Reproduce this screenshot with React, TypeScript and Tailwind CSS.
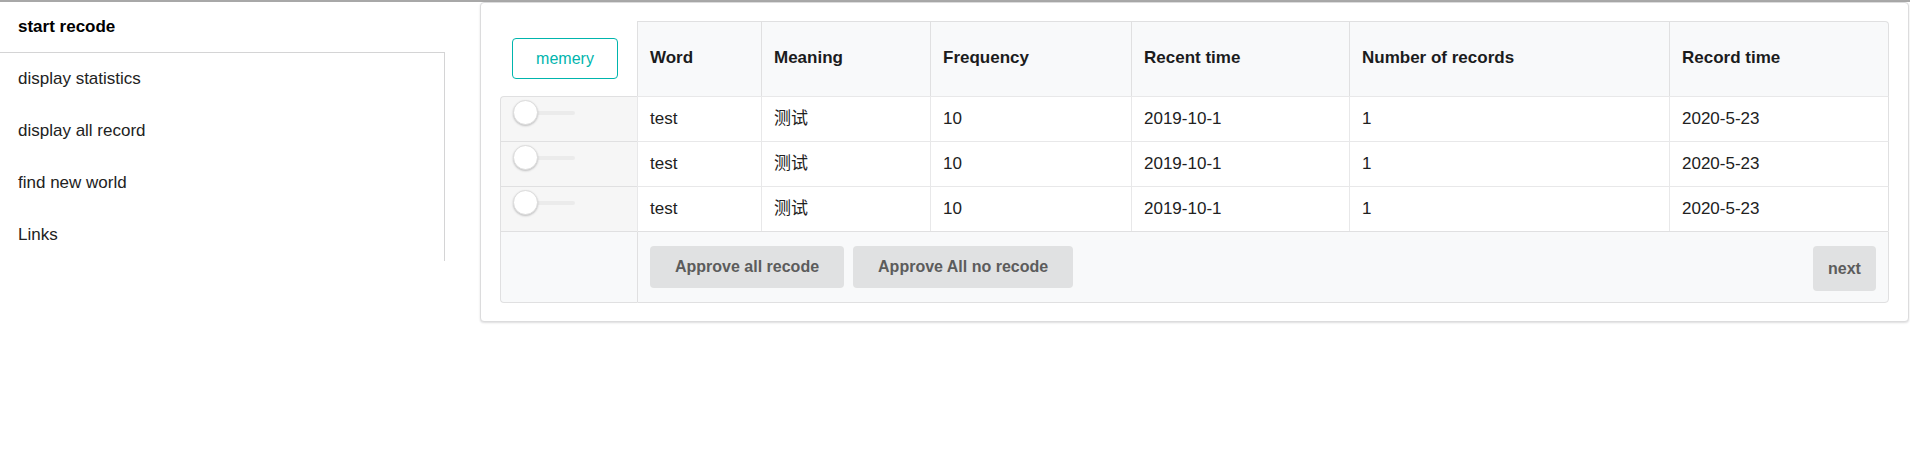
import React from "react";

const rows = [
  { word: "test", meaning: "测试", freq: "10", recent: "2019-10-1", count: "1", time: "2020-5-23" },
  { word: "test", meaning: "测试", freq: "10", recent: "2019-10-1", count: "1", time: "2020-5-23" },
  { word: "test", meaning: "测试", freq: "10", recent: "2019-10-1", count: "1", time: "2020-5-23" },
];

const headers = ["Word", "Meaning", "Frequency", "Recent time", "Number of records", "Record time"];

function Toggle() {
  return (
    <div className="relative h-[26px] w-[62px]">
      <div className="absolute left-[12px] top-[11px] h-[4px] w-[50px] rounded-full bg-[#ebebeb]" />
      <div className="absolute left-0 top-0 h-[25px] w-[25px] rounded-full border border-[#dcdcdc] bg-white shadow-[0_1px_2px_0_rgba(34,36,38,0.25)]" />
    </div>
  );
}

function GrayButton({ children, className = "" }: { children: React.ReactNode; className?: string }) {
  return (
    <button className={"rounded-[4px] bg-[#e0e1e2] text-[16px] font-bold text-[#5c5c5c] " + className}>
      {children}
    </button>
  );
}

export default function App() {
  return (
    <div className="min-h-[460px] w-full bg-white font-['Liberation_Sans','Noto_Sans_CJK_SC',sans-serif] text-[17px] text-[#212121]">
      <div className="h-[2px] w-full bg-[#a8a8a8]" />
      <div className="flex">
        <nav className="w-[445px] shrink-0">
          <div className="flex h-[51px] items-center border-b border-[#d4d4d5] px-[18px] font-bold text-black">
            start recode
          </div>
          <ul className="border-r border-[#d4d4d5]">
            {["display statistics", "display all record", "find new world", "Links"].map((item) => (
              <li key={item} className="flex h-[52px] items-center px-[18px] text-[#222]">
                {item}
              </li>
            ))}
          </ul>
        </nav>

        <main className="ml-[35px] mr-[1px] flex-1">
          <div className="rounded-[4px] border border-[#dcdcdd] bg-white px-[19px] pt-[18px] pb-[18px] shadow-[0_1px_2px_0_rgba(34,36,38,0.15)]">
            <table className="w-full table-fixed border-separate border-spacing-0">
              <colgroup>
                <col className="w-[137px]" />
                <col className="w-[124px]" />
                <col className="w-[169px]" />
                <col className="w-[201px]" />
                <col className="w-[218px]" />
                <col className="w-[320px]" />
                <col />
              </colgroup>
              <thead>
                <tr>
                  <th className="h-[75px] bg-white px-[12px] text-left align-middle">
                    <button className="h-[41px] w-[106px] rounded-[4px] border border-[#00b5ad] bg-white text-[16px] font-normal text-[#00b5ad]">
                      memery
                    </button>
                  </th>
                  {headers.map((h, i) => (
                    <th
                      key={h}
                      className={
                        "h-[75px] border-t border-l border-[#e0e0e1] bg-[#f8f9fa] px-[12px] pb-[2px] text-left align-middle font-bold text-[#1b1c1d] " +
                        (i === headers.length - 1 ? "rounded-tr-[4px] border-r" : "")
                      }
                    >
                      {h}
                    </th>
                  ))}
                </tr>
              </thead>
              <tbody>
                {rows.map((r, idx) => (
                  <tr key={idx}>
                    <td
                      className={
                        "h-[45px] border-t border-l border-[#e0e0e1] bg-[#f6f6f6] pl-[12px] pt-[3px] align-top " +
                        (idx === 0 ? "rounded-tl-[4px]" : "")
                      }
                    >
                      <Toggle />
                    </td>
                    <td className="h-[45px] border-t border-l border-[#e8e8e9] px-[12px]">{r.word}</td>
                    <td className="h-[45px] border-t border-l border-[#e8e8e9] px-[12px]">{r.meaning}</td>
                    <td className="h-[45px] border-t border-l border-[#e8e8e9] px-[12px]">{r.freq}</td>
                    <td className="h-[45px] border-t border-l border-[#e8e8e9] px-[12px]">{r.recent}</td>
                    <td className="h-[45px] border-t border-l border-[#e8e8e9] px-[12px]">{r.count}</td>
                    <td className="h-[45px] border-t border-l border-r border-[#e8e8e9] border-r-[#e0e0e1] px-[12px]">
                      {r.time}
                    </td>
                  </tr>
                ))}
              </tbody>
              <tfoot>
                <tr>
                  <td className="h-[72px] rounded-bl-[4px] border-t border-l border-b border-[#e0e0e1] bg-[#f8f9fa]" />
                  <td colSpan={6} className="h-[72px] rounded-br-[4px] border border-[#e0e0e1] bg-[#f8f9fa] pl-[12px] pr-[12px]">
                    <div className="flex items-center">
                      <div className="flex gap-[9px]">
                        <GrayButton className="h-[42px] px-[25px]">Approve all recode</GrayButton>
                        <GrayButton className="h-[42px] px-[25px]">Approve All no recode</GrayButton>
                      </div>
                      <GrayButton className="ml-auto mt-[3px] h-[45px] w-[63px]">next</GrayButton>
                    </div>
                  </td>
                </tr>
              </tfoot>
            </table>
          </div>
        </main>
      </div>
    </div>
  );
}
